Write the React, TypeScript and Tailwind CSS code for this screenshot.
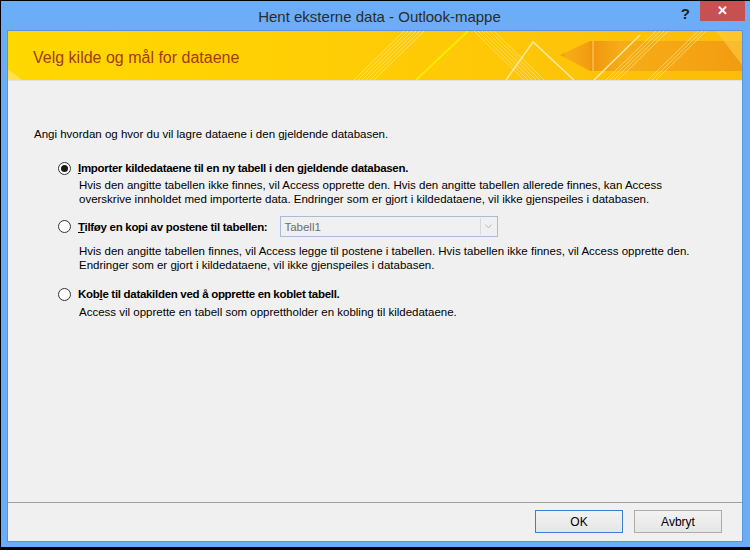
import React, { useState } from 'react';

const font = { fontFamily: '"Liberation Sans", Arial, sans-serif' };

// Yellow Office-style banner artwork (decoration only)
const BannerArt: React.FC = () => (
    <svg className="absolute inset-0" width="734" height="49" viewBox="0 0 734 49">
        <defs>
            <linearGradient id="bg" x1="0" y1="0" x2="1" y2="0">
                <stop offset="0" stopColor="#ffd800" />
                <stop offset="0.5" stopColor="#ffcc05" />
                <stop offset="1" stopColor="#fbbd0a" />
            </linearGradient>
            <linearGradient id="arrow" x1="0" y1="0" x2="1" y2="0">
                <stop offset="0" stopColor="#f0950e" />
                <stop offset="0.2" stopColor="#f6ac18" />
                <stop offset="0.6" stopColor="#f5a514" />
                <stop offset="1" stopColor="#f29c10" />
            </linearGradient>
        </defs>
        <rect width="734" height="49" fill="url(#bg)" />
        <polygon points="0,38 0,49 14,49" fill="#ffe680" opacity="0.6" />
        {/* band 1 */}
        <g stroke="#ffe680" strokeWidth="1" opacity="0.8">
            <line x1="346" y1="49" x2="396" y2="0" />
            <line x1="350" y1="49" x2="400" y2="0" />
            <line x1="354" y1="49" x2="404" y2="0" />
            <line x1="358" y1="49" x2="408" y2="0" />
            <line x1="362" y1="49" x2="412" y2="0" />
            <line x1="366" y1="49" x2="416" y2="0" />
        </g>
        <line x1="408" y1="49" x2="460" y2="0" stroke="#ffea00" strokeWidth="2" />
        {/* band 2 */}
        <g stroke="#ffe27a" strokeWidth="1" opacity="0.8">
            <line x1="466" y1="0" x2="516" y2="49" />
            <line x1="470" y1="0" x2="520" y2="49" />
            <line x1="474" y1="0" x2="524" y2="49" />
            <line x1="478" y1="0" x2="528" y2="49" />
            <line x1="482" y1="0" x2="532" y2="49" />
            <line x1="486" y1="0" x2="536" y2="49" />
        </g>
        <polyline points="498,49 525,11 566,49" fill="none" stroke="#ffe9a0" strokeWidth="1.5" />
        {/* arrow */}
        <polygon points="552,24 582,10 582,40" fill="url(#arrow)" />
        <rect x="582" y="10" width="152" height="30" fill="url(#arrow)" />
        <line x1="585" y1="10" x2="585" y2="40" stroke="#fbd36a" strokeWidth="1" />
        <g stroke="#ffe27a" strokeWidth="1" opacity="0.8">
            <line x1="598" y1="49" x2="648" y2="0" />
            <line x1="602" y1="49" x2="652" y2="0" />
            <line x1="606" y1="49" x2="656" y2="0" />
            <line x1="610" y1="49" x2="660" y2="0" />
            <line x1="640" y1="49" x2="690" y2="0" />
            <line x1="644" y1="49" x2="694" y2="0" />
            <line x1="648" y1="49" x2="698" y2="0" />
        </g>
        <line x1="586" y1="49" x2="632" y2="4" stroke="#ffe9a0" strokeWidth="1.5" />
        <polygon points="708,0 734,0 734,34" fill="#fcc93c" opacity="0.7" />
    </svg>
);

const Radio: React.FC<{ checked: boolean; onClick: () => void }> = ({ checked, onClick }) => (
    <button
        onClick={onClick}
        className="w-[13px] h-[13px] rounded-full border border-[#333] bg-white flex items-center justify-center shrink-0"
    >
        {checked && <span className="w-[7px] h-[7px] rounded-full bg-[#1a1a1a]" />}
    </button>
);

export default function App() {
    const [choice, setChoice] = useState(0);

    return (
        <div className="w-[750px] h-[550px] bg-black pt-px pl-px pb-[3px] overflow-hidden" style={font}>
            <div className="h-full bg-[#6badf6] flex flex-col">
                {/* Title bar */}
                <div className="h-[29px] flex items-start relative shrink-0">
                    <div className="flex-1 text-center text-[15px] text-[#2b2b2b] pt-[5px] pl-[8px]">
                        Hent eksterne data - Outlook-mappe
                    </div>
                    <div className="absolute right-[5px] top-0 flex items-start">
                        <span className="text-[15px] font-bold text-[#222] mr-[10px] mt-[2px]">?</span>
                        <button className="w-[45px] h-[20px] bg-[#c75050] text-white text-[13px] font-bold flex items-center justify-center">
                            ✕
                        </button>
                    </div>
                </div>

                {/* Client area */}
                <div className="flex-1 ml-[6px] mr-[7px] mb-[5px] border border-[#5a95dc] bg-[#f0f0f0] flex flex-col">
                    <div className="relative h-[49px] shrink-0 border-b border-[#e2e2e2] box-content">
                        <BannerArt />
                        <div className="relative pl-[25px] pt-[15px] text-[16px] text-[#a33b0a]">
                            Velg kilde og mål for dataene
                        </div>
                    </div>

                    <div className="flex-1 pl-[26px] pt-[46px] text-[11.5px] text-black leading-[14px]">
                        <div>Angi hvordan og hvor du vil lagre dataene i den gjeldende databasen.</div>

                        <div className="ml-[24px] mt-[20px]">
                            <div className="flex items-center gap-[7px] h-[14px]">
                                <Radio checked={choice === 0} onClick={() => setChoice(0)} />
                                <span className="font-bold tracking-[-0.3px]">
                                    <u>I</u>mporter kildedataene til en ny tabell i den gjeldende databasen.
                                </span>
                            </div>
                            <div className="ml-[21px] mt-[4px] whitespace-nowrap leading-[13.5px]">
                                Hvis den angitte tabellen ikke finnes, vil Access opprette den. Hvis den angitte tabellen allerede finnes, kan Access
                                <br />
                                overskrive innholdet med importerte data. Endringer som er gjort i kildedataene, vil ikke gjenspeiles i databasen.
                            </div>

                            <div className="flex items-center gap-[7px] mt-[10px] h-[21px]">
                                <Radio checked={choice === 1} onClick={() => setChoice(1)} />
                                <span className="font-bold tracking-[-0.3px]">
                                    <u>T</u>ilføy en kopi av postene til tabellen:
                                </span>
                                <div className="ml-[6px] w-[218px] h-[21px] border border-[#a7bcd9] bg-[#f0f0f0] flex items-center">
                                    <span className="flex-1 pl-[3px] text-[#6d6d6d]">Tabell1</span>
                                    <span className="w-[16px] h-[17px] mr-px border-l border-[#dadada] flex items-center justify-center">
                                        <svg width="7" height="5" viewBox="0 0 7 5">
                                            <polyline points="0.5,0.5 3.5,4 6.5,0.5" fill="none" stroke="#b8b8b8" strokeWidth="1" />
                                        </svg>
                                    </span>
                                </div>
                            </div>
                            <div className="ml-[21px] mt-[8px] whitespace-nowrap leading-[13.5px]">
                                Hvis den angitte tabellen finnes, vil Access legge til postene i tabellen. Hvis tabellen ikke finnes, vil Access opprette den.
                                <br />
                                Endringer som er gjort i kildedataene, vil ikke gjenspeiles i databasen.
                            </div>

                            <div className="flex items-center gap-[7px] mt-[15px] h-[14px]">
                                <Radio checked={choice === 2} onClick={() => setChoice(2)} />
                                <span className="font-bold tracking-[-0.3px]">
                                    Kob<u>l</u>e til datakilden ved å opprette en koblet tabell.
                                </span>
                            </div>
                            <div className="ml-[21px] mt-[4px] whitespace-nowrap">
                                Access vil opprette en tabell som opprettholder en kobling til kildedataene.
                            </div>
                        </div>
                    </div>

                    {/* Footer */}
                    <div className="h-[39px] shrink-0 border-t border-[#a0a0a0] flex justify-end items-start pt-[7px] pr-[20px] gap-[11px]">
                        <button className="w-[88px] h-[23px] border border-[#3c7fd1] bg-gradient-to-b from-[#f2f2f2] to-[#e6e6e6] text-[12px] text-black">
                            OK
                        </button>
                        <button className="w-[88px] h-[23px] border border-[#acacac] bg-gradient-to-b from-[#f2f2f2] to-[#e6e6e6] text-[12px] text-black">
                            Avbryt
                        </button>
                    </div>
                </div>
            </div>
        </div>
    );
}
